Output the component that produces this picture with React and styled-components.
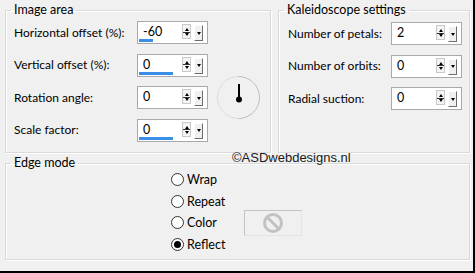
import styled, { createGlobalStyle } from "styled-components";

const Global = createGlobalStyle`
  html, body { margin:0; padding:0; background:#fff; }
  body { font-family:Lato, "Noto Sans", sans-serif; }
`;

const leftFields = [
  { label: "Horizontal offset (%):", value: "-60", bar: 0.2 },
  { label: "Vertical offset (%):", value: "0", bar: 0.5 },
  { label: "Rotation angle:", value: "0" },
  { label: "Scale factor:", value: "0", bar: 0.5 },
];

const rightFields = [
  { label: "Number of petals:", value: "2" },
  { label: "Number of orbits:", value: "0" },
  { label: "Radial suction:", value: "0" },
];

const modes = ["Wrap", "Repeat", "Color", "Reflect"];

function Spinner({ value, bar }) {
  return (
    <Field>
      <Value>{value}</Value>
      <UpDown>
        <Arrow $up />
        <Divider />
        <Arrow />
      </UpDown>
      <Drop>
        <Arrow />
      </Drop>
      {bar !== undefined && <Bar style={{ width: `${bar * 68}px` }} />}
    </Field>
  );
}

function Dial() {
  return (
    <DialBox>
      <svg width="45" height="45" viewBox="0 0 45 45">
        <circle cx="22.5" cy="22.5" r="21" fill="none" stroke="#fff" strokeWidth="1" />
        <path d="M22.5 1.5 A21 21 0 0 1 22.5 43.5" fill="none" stroke="#b8b8b8" strokeWidth="1" />
        <path d="M22.5 43.5 A21 21 0 0 1 22.5 1.5" fill="none" stroke="#d6d6d6" strokeWidth="1" />
        <line x1="23" y1="9" x2="23" y2="24" stroke="#000" strokeWidth="2" />
        <circle cx="23" cy="24.5" r="3" fill="#000" />
      </svg>
    </DialBox>
  );
}

export default function App() {
  return (
    <Frame>
      <Global />
      <TopRow>
        <Group $w={266} $h={151}>
          <Legend>Image area</Legend>
          <LeftGrid>
            {leftFields.map((f, i) => (
              <Row key={i}>
                <Label>{f.label}</Label>
                <Spinner value={f.value} bar={f.bar} />
              </Row>
            ))}
            <Dial />
          </LeftGrid>
        </Group>
        <Group $w={192} $h={151}>
          <Legend>Kaleidoscope settings</Legend>
          <RightGrid>
            {rightFields.map((f, i) => (
              <Row key={i}>
                <Label>{f.label}</Label>
                <Spinner value={f.value} />
              </Row>
            ))}
          </RightGrid>
        </Group>
      </TopRow>
      <EdgeGroup $w={465} $h={105}>
        <Legend>Edge mode</Legend>
        <RadioGrid>
          {modes.map((m) => (
            <Radio key={m}>
              <Dot $on={m === "Reflect"} />
              {m}
            </Radio>
          ))}
          <Swatch>
            <svg width="22" height="22" viewBox="0 0 22 22">
              <circle cx="11" cy="11" r="8.5" fill="none" stroke="#c2c2c2" strokeWidth="3" />
              <line x1="5" y1="5" x2="17" y2="17" stroke="#c2c2c2" strokeWidth="3" />
            </svg>
          </Swatch>
        </RadioGrid>
      </EdgeGroup>
      <Mark>©ASDwebdesigns.nl</Mark>
    </Frame>
  );
}

const Frame = styled.div`
  position:relative;
  width:468px;
  height:269px;
  padding:2px 0 0 5px;
  background:#f0f0f0;
  border-right:2px solid #000;
  border-bottom:2px solid #000;
  font-size:12px;
  color:#000;
`;

const TopRow = styled.div`
  display:flex;
  gap:7px;
`;

const Group = styled.fieldset`
  box-sizing:border-box;
  width:${p => p.$w}px;
  height:${p => p.$h}px;
  margin:0;
  padding:0;
  min-width:0;
  border:1px solid #d9d9d9;
  box-shadow:inset 1px 1px 0 #fff, 1px 1px 0 #fff;
`;

const EdgeGroup = styled(Group)`
  margin-top:2px;
`;

const Legend = styled.legend`
  margin-left:5px;
  padding:0 3px;
  line-height:16px;
  font-size:12.5px;
`;

const LeftGrid = styled.div`
  display:grid;
  grid-template-columns:114px 71px 43px;
  grid-template-rows:repeat(4, 23px);
  row-gap:9.5px;
  column-gap:9px;
  padding:3px 0 0 8px;
`;

const RightGrid = styled(LeftGrid)`
  grid-template-columns:94px 71px;
  grid-template-rows:repeat(3, 23px);
  padding:4px 0 0 9px;
`;

const Row = styled.div`
  display:contents;
`;

const Label = styled.div`
  grid-column:1;
  align-self:center;
  white-space:nowrap;
  line-height:16px;
  font-size:12px;
`;

const Field = styled.div`
  grid-column:2;
  position:relative;
  box-sizing:border-box;
  height:23px;
  display:flex;
  align-items:flex-start;
  background:#fff;
  border:1px solid #a9a9a9;
  padding:2px 4px 0 5px;
`;

const Value = styled.div`
  flex:1;
  line-height:15px;
  font-size:12.5px;
`;

const UpDown = styled.div`
  box-sizing:border-box;
  width:9px;
  height:15px;
  display:flex;
  flex-direction:column;
  align-items:center;
  justify-content:space-between;
  padding:3px 0 2px;
  background:#f4f4f4;
  border:1px solid #c9c9c9;
`;

const Divider = styled.div`
  width:7px;
  height:1px;
  background:#333;
`;

const Arrow = styled.div`
  width:0;
  height:0;
  border-left:2.5px solid transparent;
  border-right:2.5px solid transparent;
  ${p => p.$up ? "border-bottom:3px solid #000;" : "border-top:3px solid #000;"}
`;

const Drop = styled.div`
  box-sizing:border-box;
  width:9px;
  height:16px;
  margin:1px 0 0 3px;
  display:flex;
  align-items:center;
  justify-content:center;
  background:#f0f0f0;
  border-top:1px solid #fff;
  border-left:1px solid #fff;
  border-right:1px solid #6d6d6d;
  border-bottom:1px solid #6d6d6d;
`;

const Bar = styled.div`
  position:absolute;
  left:1px;
  bottom:1px;
  height:3px;
  background:#3b8ee5;
`;

const DialBox = styled.div`
  grid-column:3;
  grid-row:2 / 5;
  align-self:center;
  width:45px;
  height:45px;
  margin-left:-1px;
  svg { display:block; }
`;

const RadioGrid = styled.div`
  display:grid;
  grid-template-columns:73px 58px;
  grid-template-rows:repeat(4, 21.5px);
  padding-left:165px;
  margin-top:-2px;
`;

const Radio = styled.div`
  grid-column:1;
  display:flex;
  align-items:center;
  gap:3px;
  white-space:nowrap;
  font-size:12.5px;
`;

const Dot = styled.span`
  box-sizing:border-box;
  width:13px;
  height:13px;
  border-radius:50%;
  border:1px solid #333;
  background:#fff;
  display:flex;
  align-items:center;
  justify-content:center;
  &::after {
    content:"";
    width:7px;
    height:7px;
    border-radius:50%;
    background:${p => p.$on ? "#000" : "transparent"};
  }
`;

const Swatch = styled.div`
  grid-column:2;
  grid-row:3;
  align-self:center;
  box-sizing:border-box;
  height:26px;
  display:flex;
  align-items:center;
  justify-content:center;
  border:1px solid #c4c4c4;
  border-right-color:#e4e4e4;
  border-bottom-color:#e4e4e4;
  background:#f0f0f0;
  svg { display:block; }
`;

const Mark = styled.div`
  position:absolute;
  left:232px;
  top:150px;
  font-family:"Liberation Sans", Arial, sans-serif;
  font-size:13px;
  color:#1a1a1a;
  line-height:16px;
`;
